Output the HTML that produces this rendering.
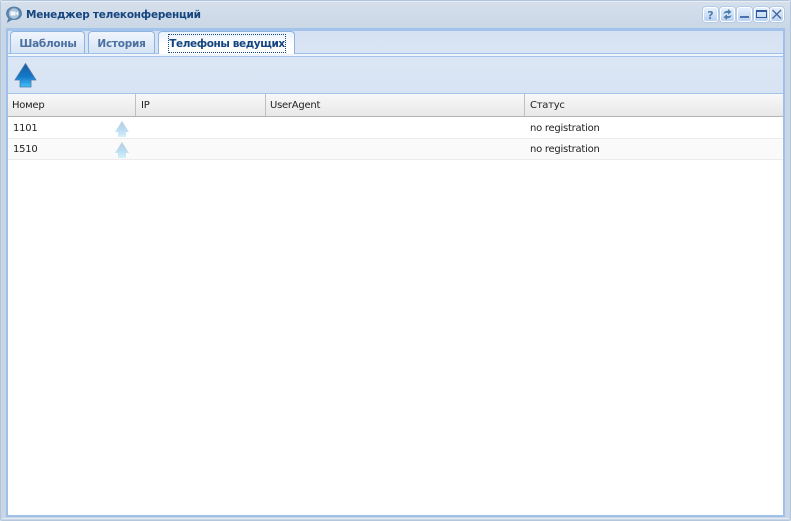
<!DOCTYPE html>
<html><head><meta charset="utf-8">
<style>
html,body{margin:0;padding:0;width:791px;height:521px;overflow:hidden;background:#cddae8;font-family:"DejaVu Sans",sans-serif}
div,span{position:absolute;box-sizing:border-box;white-space:nowrap}
svg{position:absolute}
.t{font-size:10px;color:#222;line-height:14px;letter-spacing:-.25px}
.tab{top:31px;height:23px;border:1px solid #8fb4e4;border-bottom:0;border-radius:4px 4px 0 0;background:linear-gradient(#f0f5fc,#d5e3f5);font:bold 10.500px/24px "DejaVu Sans",sans-serif;color:#4c70a0;text-align:center;letter-spacing:-.25px}
.b{top:7px;width:15px;height:15px;border:1px solid #fff;border-radius:3px;background:linear-gradient(#e6f0fc,#b9d2f0);box-shadow:0 0 0 1px #b4cbe6}
</style></head><body>
<div style="left:0;top:0;width:791px;height:521px;border:1px solid #b4c6dc;border-radius:3px;background:linear-gradient(#d6e0ec,#c9d6e5 30px)"></div>
<div style="left:1px;top:1px;width:789px;height:1px;background:#e6edf5"></div>
<div style="left:2px;top:518px;width:787px;height:1px;background:#e4ebf3"></div>

<svg style="left:5px;top:6px" width="18" height="17" viewBox="0 0 18 17"><path d="M9 1C4.500 1 1.500 3.800 1.500 7.500c0 2 .9 3.500 2.300 4.600L2.500 16l4.500-2.600c.6.100 1.300.2 2 .2 4.500 0 7.500-2.700 7.500-6.100S13.500 1 9 1z" fill="#5f86ac" stroke="#4f7aa4" stroke-width=".8"/><circle cx="9" cy="7.500" r="5.200" fill="#a9c6dc"/><rect x="5.500" y="5.500" width="5" height="4" fill="#f4f8fc"/><path d="M10.500 7.500l2.500-2v4z" fill="#f4f8fc"/></svg>
<div style="left:26px;top:7px;font:bold 10.500px/16px 'DejaVu Sans',sans-serif;color:#15457f;letter-spacing:-.25px">Менеджер телеконференций</div>

<div class="b" style="left:703px"><svg style="left:0;top:0" width="13" height="13"><text x="6.500" y="11" text-anchor="middle" font-family="DejaVu Sans" font-weight="bold" font-size="11" fill="#4f7fae">?</text></svg></div>
<div class="b" style="left:720px"><svg style="left:0;top:0" width="13" height="13" viewBox="0 0 13 13"><path d="M2.500 6c.2-2 2-3.400 4.500-3.200V1l3.500 2.900L7 6.800V5C5.300 4.800 4 5 2.500 6zM10.500 7c-.2 2-2 3.400-4.500 3.200V12L2.500 9.100 6 6.200V8c1.700.2 3 0 4.500-1z" fill="#4f7fae"/></svg></div>
<div class="b" style="left:737px"><div style="left:2px;top:8px;width:9px;height:2px;background:#4f6fa8"></div></div>
<div class="b" style="left:754px"><div style="left:1px;top:2px;width:11px;height:8px;border:1px solid #2f5a9c;border-top-width:2px"></div></div>
<div class="b" style="left:770px;width:14px"><svg style="left:0;top:0" width="12" height="13"><path d="M1.500 2l8.500 8.500M10 2l-8.500 8.500" stroke="#3f669f" stroke-width="1.300"/></svg></div>

<div style="left:6px;top:28px;width:779px;height:489px;border:2px solid #9fc0ea;border-top:3px solid #a3c3ea;background:#fff"></div>
<div style="left:8px;top:31px;width:775px;height:24px;background:linear-gradient(#d6e2f1,#d9e5f4)"></div>
<div class="tab" style="left:10px;width:75px;padding-left:1px">Шаблоны</div>
<div class="tab" style="left:88px;width:67px">История</div>
<div class="tab" style="left:158px;width:137px;height:24px;background:linear-gradient(#eaf2fc,#fff 60%);color:#15457f"></div>
<div style="left:8px;top:53px;width:150px;height:1px;background:#9fc0ea"></div>
<div style="left:295px;top:53px;width:488px;height:1px;background:#9fc0ea"></div>
<div style="left:168px;top:34px;width:118px;height:19px;border:1px dotted #15457f;font:bold 10.500px/18px 'DejaVu Sans',sans-serif;color:#15457f;text-align:center;letter-spacing:-.4px">Телефоны ведущих</div>

<div style="left:8px;top:54px;width:775px;height:3px;background:#f0f5fc"></div>
<div style="left:8px;top:56px;width:775px;height:1px;background:#a3c3ea"></div>
<div style="left:8px;top:57px;width:775px;height:36px;background:linear-gradient(#dbe6f4,#d8e4f3)"></div>
<svg style="left:14px;top:63px" width="23" height="25" viewBox="0 0 23 25"><defs><linearGradient id="g" x1="0" y1="0" x2="0" y2="1"><stop offset="0" stop-color="#1c5c9c"/><stop offset=".55" stop-color="#1478c8"/><stop offset="1" stop-color="#40c0f8"/></linearGradient></defs><path d="M11.500 .5L22 17h-5v7H6v-7H1z" fill="url(#g)" stroke="#4a78ac" stroke-width=".8"/></svg>

<div style="left:8px;top:93px;width:775px;height:24px;border-top:1px solid #a3c3ea;border-bottom:1px solid #b4b4b4;background:linear-gradient(#f8f8f8,#e8e8e8)"></div>
<div style="left:135px;top:94px;width:1px;height:22px;background:#c0c0c0"></div>
<div style="left:265px;top:94px;width:1px;height:22px;background:#c0c0c0"></div>
<div style="left:524px;top:94px;width:1px;height:22px;background:#c0c0c0"></div>
<div class="t" style="left:12px;top:99px">Номер</div>
<div class="t" style="left:141px;top:99px">IP</div>
<div class="t" style="left:270px;top:99px">UserAgent</div>
<div class="t" style="left:530px;top:99px">Статус</div>

<div style="left:8px;top:138px;width:775px;height:1px;background:#ececec"></div>
<div style="left:8px;top:139px;width:775px;height:20px;background:#fafafa"></div>
<div style="left:8px;top:159px;width:775px;height:1px;background:#ececec"></div>
<div class="t" style="left:13px;top:122px">1101</div>
<div class="t" style="left:13px;top:143px">1510</div>
<div class="t" style="left:530px;top:122px">no registration</div>
<div class="t" style="left:530px;top:143px">no registration</div>
<svg style="left:115px;top:121px" width="15" height="16" viewBox="0 0 15 16"><defs><linearGradient id="h" x1="0" y1="0" x2="0" y2="1"><stop offset="0" stop-color="#b8ccdc"/><stop offset=".55" stop-color="#bcdcf0"/><stop offset="1" stop-color="#d4f0fc"/></linearGradient></defs><path d="M7 0L14 11H11v5H3v-5H0z" fill="url(#h)"/></svg>
<svg style="left:115px;top:142px" width="15" height="16" viewBox="0 0 15 16"><path d="M7 0L14 11H11v5H3v-5H0z" fill="url(#h)"/></svg>
</body></html>
